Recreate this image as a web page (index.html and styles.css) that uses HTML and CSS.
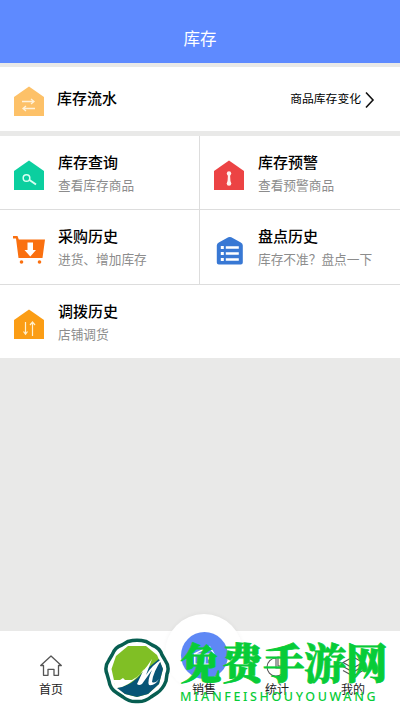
FILE: index.html
```html
<!DOCTYPE html>
<html lang="zh-CN">
<head>
<meta charset="utf-8">
<title>库存</title>
<link rel="stylesheet" href="styles.css">
</head>
<body>
<div class="app">
  <header class="header">库存</header>
  <section class="flow">
    <svg class="icon" viewBox="0 0 32 32"><path fill="#fdc168" d="M1 12 16 1.500 31 12V31H1z"/><path d="M9 16.500h12M18 14l3 2.500-3 2.500M22 23.500H10M13 21l-3 2.500 3 2.500" fill="none" stroke="#fff2da" stroke-width="1.300"/></svg>
    <h2 class="title">库存流水</h2>
    <span class="more">商品库存变化</span>
    <svg class="chevron" viewBox="0 0 10 18"><path d="M1 1.500 8 9 1 16.500" fill="none" stroke="#111" stroke-width="1.600"/></svg>
  </section>
  <main class="grid">
    <div class="cell">
      <svg class="icon" viewBox="0 0 32 32"><path fill="#0bcf9f" d="M1 12 16 1.500 31 12V31H1z"/><g fill="none" stroke="#d8fff2"><circle cx="13.500" cy="19" r="3.300" stroke-width="1.500"/><path d="m16.500 21 6.500 4.500" stroke-width="2"/></g></svg>
      <div><h2 class="title">库存查询</h2><p class="desc">查看库存商品</p></div>
    </div>
    <div class="cell right">
      <svg class="icon" viewBox="0 0 32 32"><path fill="#ec4344" d="M1 12 16 1.500 31 12V31H1z"/><g fill="#fff0ee"><circle cx="16" cy="14.500" r="2.200"/><circle cx="16" cy="24.500" r="2.300"/><path d="M15 15h2l.6 9h-3.200z"/></g></svg>
      <div><h2 class="title">库存预警</h2><p class="desc">查看预警商品</p></div>
    </div>
    <div class="cell">
      <svg class="icon" viewBox="0 0 32 32"><path fill="#fa7010" d="M0 3h4.500l1.300 3.500H32L29.500 25H5.500L3 5.500H0z"/><circle cx="8.500" cy="29" r="1.800" fill="#fa7010"/><circle cx="26.500" cy="29" r="1.800" fill="#fa7010"/><path fill="#fff" d="M14.500 9.500h5.500V17h3l-5.700 6.500L11.500 17h3z"/></svg>
      <div><h2 class="title">采购历史</h2><p class="desc">进货、增加库存</p></div>
    </div>
    <div class="cell right">
      <svg class="icon" viewBox="0 0 32 32"><g transform="translate(.8 1.500)"><path fill="#3878d4" d="M5 8 14.500 2.800q1.500-.8 3 0L27 8q2 1 2 3v17q0 2-2 2H5q-2 0-2-2V11q0-2 2-3z"/><path d="M12 13h13M12 19h13M12 25h13" stroke="#fff" stroke-width="2.300"/><path d="M7 13h3M7 19h3M7 25h3" stroke="#fff" stroke-width="2.800"/></g></svg>
      <div><h2 class="title">盘点历史</h2><p class="desc">库存不准？盘点一下</p></div>
    </div>
    <div class="cell wide">
      <svg class="icon" viewBox="0 0 32 32"><path fill="#fb9d15" d="M1 12 16 1.500 31 12V31H1z"/><path d="M12.500 14v12M10.500 23.500l2 2.800 2-2.800M19.500 28V15M17 17l2.500-3 2.500 3" fill="none" stroke="#fff0cf" stroke-width="1.200"/></svg>
      <div><h2 class="title">调拨历史</h2><p class="desc">店铺调货</p></div>
    </div>
  </main>
  <nav class="nav">
    <div class="tab home"><svg class="tabicon" viewBox="0 0 24 24"><path d="M4.500 11.500H1.700L12 2l10.300 9.500h-2.800V21.300H15v-6H9v6H4.500z" fill="none" stroke="#555" stroke-width="1.300" stroke-linejoin="round"/></svg><span>首页</span></div>
    <div class="tab stock"><span>库存</span></div>
    <div class="tab sale"><div class="halo"><div class="disc"><svg viewBox="0 0 28 26"><path d="M3 12 20 4l5 8M4 12h20v11H4zM8 16h4M8 19h4M15 13v9M19 12v6" fill="none" stroke="#fff" stroke-width="1.500"/></svg></div></div><span>销售</span></div>
    <div class="tab stats"><svg class="tabicon" viewBox="0 0 24 24"><path d="M11 4a9 9 0 1 0 9 10H11zM13 3v9h8a8.500 8.500 0 0 0-8-9z" fill="none" stroke="#555" stroke-width="1.100"/></svg><span>统计</span></div>
    <div class="tab mine"><svg class="tabicon" viewBox="0 0 24 24"><path d="M12 3 22 8.500 12 14 2 8.500zM2 12.500 12 18l10-5.500M2 16.500 12 22l10-5.500" fill="none" stroke="#555" stroke-width="1.100"/></svg><span>我的</span></div>
  </nav>
  <div class="brand">
    <svg class="logo" viewBox="0 0 68 66">
      <path d="M25 3.500Q34 1 43 3.500L49 7Q57 10 59 17L62 22Q67 29 64 36L63 43Q60 51 54 55L48 59Q42 64 34 63.500Q26 64 20 59L14 55Q7 51 6 43L4 36Q1 29 6 22L9 17Q12 9 19 7Z" fill="#fff" stroke="#075e51" stroke-width="3.500"/>
      <path d="M25 8H43L54 17 60 31 56 46 45 56 34 59 22 56 12 47 8.500 31 13 18Z" fill="#80bf25"/>
      <path d="M14 50Q30 47 40 34L56 21 60 31 56 46 45 56 34 59 22 56Z" fill="#075576"/>
      <path d="M10 42h7l3-2 2 2h7Q39 37 49 21L43 37Q49 27 59 21 50 34 49 44 52 46 56 41 52 48 46 47 44 43 49 32L39 46Q36 48 34 46L41 31Q32 44 19 49L13 50Z" fill="#fff"/>
    </svg>
    <div class="cn">免费手游网</div>
    <div class="en">MIANFEISHOUYOUWANG</div>
  </div>
</div>
</body>
</html>
```
FILE: styles.css
```css
* { box-sizing: border-box; }
body { margin: 0; font-family: "Noto Sans CJK SC", sans-serif; color: #111; }
.app { position: relative; display: flex; flex-direction: column; height: 711px; overflow: hidden; background: #e9e9e8; }
.header { height: 63px; padding-top: 25px; background: #5e8aff; color: #fff; font-size: 16.500px; line-height: 26px; text-align: center; }
.flow { display: flex; align-items: center; height: 64px; margin: 4px 0 5px; padding: 0 25px 0 13px; background: #fff; }
.icon { display: block; flex: none; width: 32px; height: 32px; }
.flow .icon { margin-top: 3px; }
.title { margin: 0; font-size: 15px; font-weight: 500; line-height: 22px; color: #000; }
.flow .title { margin: -2px 0 0 12px; }
.more { margin: -2px 0 0 auto; font-size: 11.800px; line-height: 18px; color: #000; }
.chevron { width: 10px; height: 18px; margin: 2px 0 0 4px; }
.grid { display: grid; grid-template-columns: 200px 200px; grid-template-rows: 74px 75px 73px; background: #fff; }
.cell { display: flex; align-items: flex-start; padding: 15px 0 0 13px; border-right: 1px solid #ddd; border-bottom: 1px solid #ddd; }
.cell .icon { margin: 8px 13px 0 0; }
.right { border-right: 0; }
.wide { grid-column: 1 / 3; border: 0; }
.desc { margin: 3px 0 0; font-size: 12.700px; line-height: 18px; color: #8c8c8c; }
.nav { display: flex; height: 80px; margin-top: auto; background: #fff; font-size: 12px; line-height: 16px; color: #222; }
.tab { display: flex; flex-direction: column; align-items: center; justify-content: flex-end; padding-bottom: 14px; width: 74px; }
.home { width: 102px; }
.stock { width: 64px; }
.sale { width: 76px; }
.stats { width: 70px; }
.mine { width: 82px; }
.tabicon { width: 24px; height: 24px; margin-bottom: 3px; }
.halo { display: flex; flex: none; align-items: center; justify-content: center; width: 78px; height: 78px; margin-bottom: -11px; padding-top: 4px; border-radius: 50%; background: #fff; box-shadow: 0 -1px 4px rgba(0, 0, 0, .04); }
.disc { display: flex; align-items: center; justify-content: center; width: 47px; height: 47px; border-radius: 50%; background: #5e88f5; }
.disc svg { width: 26px; height: 24px; }
.sale span, .stats span, .mine span { position: relative; }
.brand { position: absolute; left: 103px; top: 638px; width: 290px; height: 73px; color: #08cc38; }
.logo { position: absolute; left: 0; top: 0; width: 68px; height: 66px; }
.cn { position: absolute; left: 77px; top: 0; font-family: "Noto Serif CJK SC", "Noto Sans CJK SC", serif; font-size: 41.500px; font-weight: 900; line-height: 46px; white-space: nowrap; -webkit-text-stroke: .8px #08cc38; }
.en { position: absolute; left: 77px; top: 50px; font-family: "Noto Sans", sans-serif; font-size: 12.500px; font-weight: 500; line-height: 18px; letter-spacing: 2.600px; white-space: nowrap; }
```
